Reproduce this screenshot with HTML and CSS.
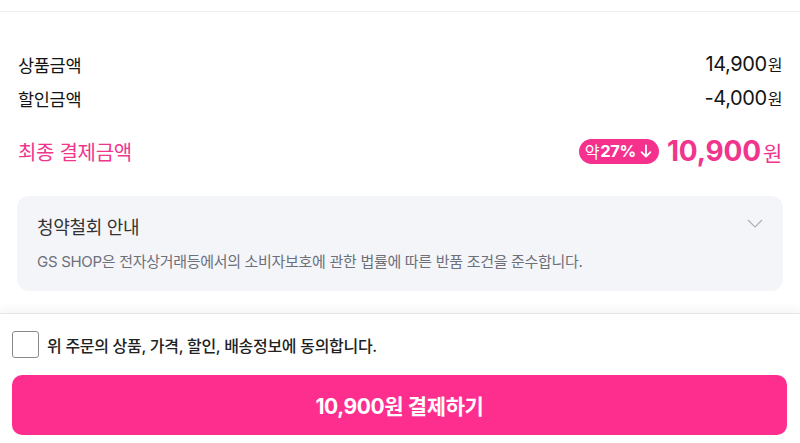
FILE: index.html
```html
<!DOCTYPE html>
<html lang="ko">
<head>
<meta charset="utf-8">
<link rel="stylesheet" href="styles.css">
</head>
<body>
<div class="page">
  <div class="topbar"></div>
  <section class="summary">
    <div class="row">
      <span class="label">상품금액</span>
      <span class="amount">14,900<span class="won">원</span></span>
    </div>
    <div class="row">
      <span class="label">할인금액</span>
      <span class="amount">-4,000<span class="won">원</span></span>
    </div>
    <div class="row final">
      <span class="label">최종 결제금액</span>
      <span class="final-right">
        <span class="badge"><span class="yak">약</span>27%<svg class="arrow" width="12" height="14" viewBox="0 0 12 14"><path d="M6 1.5v11M1.6 8.2L6 12.6l4.4-4.4" fill="none" stroke="#fff" stroke-width="1.8" stroke-linecap="round" stroke-linejoin="round"/></svg></span>
        <span class="total">10,900<span class="won">원</span></span>
      </span>
    </div>
  </section>
  <section class="notice">
    <div class="notice-head">
      <span class="notice-title">청약철회 안내</span>
      <svg class="chev" width="16" height="9" viewBox="0 0 16 9"><path d="M1 1l7 7 7-7" fill="none" stroke="#a9adb6" stroke-width="1.1"/></svg>
    </div>
    <p class="notice-text">GS SHOP은 전자상거래등에서의 소비자보호에 관한 법률에 따른 반품 조건을 준수합니다.</p>
  </section>
  <footer class="footer">
    <label class="agree">
      <span class="box"></span>
      <span class="agree-text">위 주문의 상품, 가격, 할인, 배송정보에 동의합니다.</span>
    </label>
    <button class="pay">10,900원 결제하기</button>
  </footer>
</div>
</body>
</html>
```
FILE: styles.css
```css
* { box-sizing: border-box; }
html, body { margin: 0; padding: 0; background: #fff; }
body {
  font-family: Inter, "Noto Sans CJK KR", sans-serif;
  color: #222;
  width: 800px;
  height: 443px;
  overflow: hidden;
}
.page { display: flex; flex-direction: column; }
.topbar { height: 12px; border-bottom: 1px solid #ececf1; }
.summary { padding: 35px 18px 0 18px; display: flex; flex-direction: column; }
.row {
  display: flex; justify-content: space-between; align-items: center;
  height: 34px;
}
.label { font-size: 17.5px; color: #151515; letter-spacing: -0.3px; }
.amount { font-size: 20px; color: #151515; letter-spacing: -0.4px; }
.won { font-size: 16px; margin-left: 1px; }
.row.final { margin-top: 18px; height: 36px; }
.final .label { color: #f0358d; font-size: 20px; }
.final-right { display: flex; align-items: center; gap: 8px; }
.badge {
  display: inline-flex; align-items: center;
  background: #f5318d; color: #fff;
  border-radius: 13px; height: 25px; padding: 0 7px 0 6px;
  font-size: 16.5px; font-weight: 700; letter-spacing: -0.3px;
}
.badge .yak { font-weight: 400; font-size: 16px; margin-right: 1px; }
.badge .arrow { margin-left: 4px; }
.total { font-size: 28px; font-weight: 700; color: #f0358d; letter-spacing: -0.2px; }
.total .won { font-size: 21px; font-weight: 400; margin-left: 2px; }
.notice {
  margin: 27px 17px 0 17px;
  background: #f4f5f9; border-radius: 12px;
  height: 95px; padding: 17px 18px 0 20px;
}
.notice-head { display: flex; justify-content: space-between; align-items: center; }
.notice-title { font-size: 18px; color: #333; letter-spacing: -0.3px; }
.chev { margin-top: -6px; margin-right: 2px; }
.notice-text { margin: 11px 0 0; font-size: 15px; color: #6c707a; letter-spacing: -0.3px; }
.footer {
  margin-top: 22px;
  border-top: 1px solid #e6e6e6;
  box-shadow: 0 -6px 8px rgba(0,0,0,0.035);
  padding: 17px 13px 0 12px;
  display: flex; flex-direction: column;
}
.agree { display: flex; align-items: center; gap: 8px; height: 27px; }
.box {
  width: 27px; height: 27px; border: 1.5px solid #8a8a8a; border-radius: 3px; background: #fff;
}
.agree-text { font-size: 16px; font-weight: 500; color: #222; letter-spacing: -0.3px; }
.pay {
  margin-top: 17px; height: 60px; width: 100%;
  background: #fe2e8f; border: none; border-radius: 10px;
  color: #fff; font-family: Inter, "Noto Sans CJK KR", sans-serif;
  font-size: 21px; font-weight: 700; letter-spacing: -0.4px;
}
```
